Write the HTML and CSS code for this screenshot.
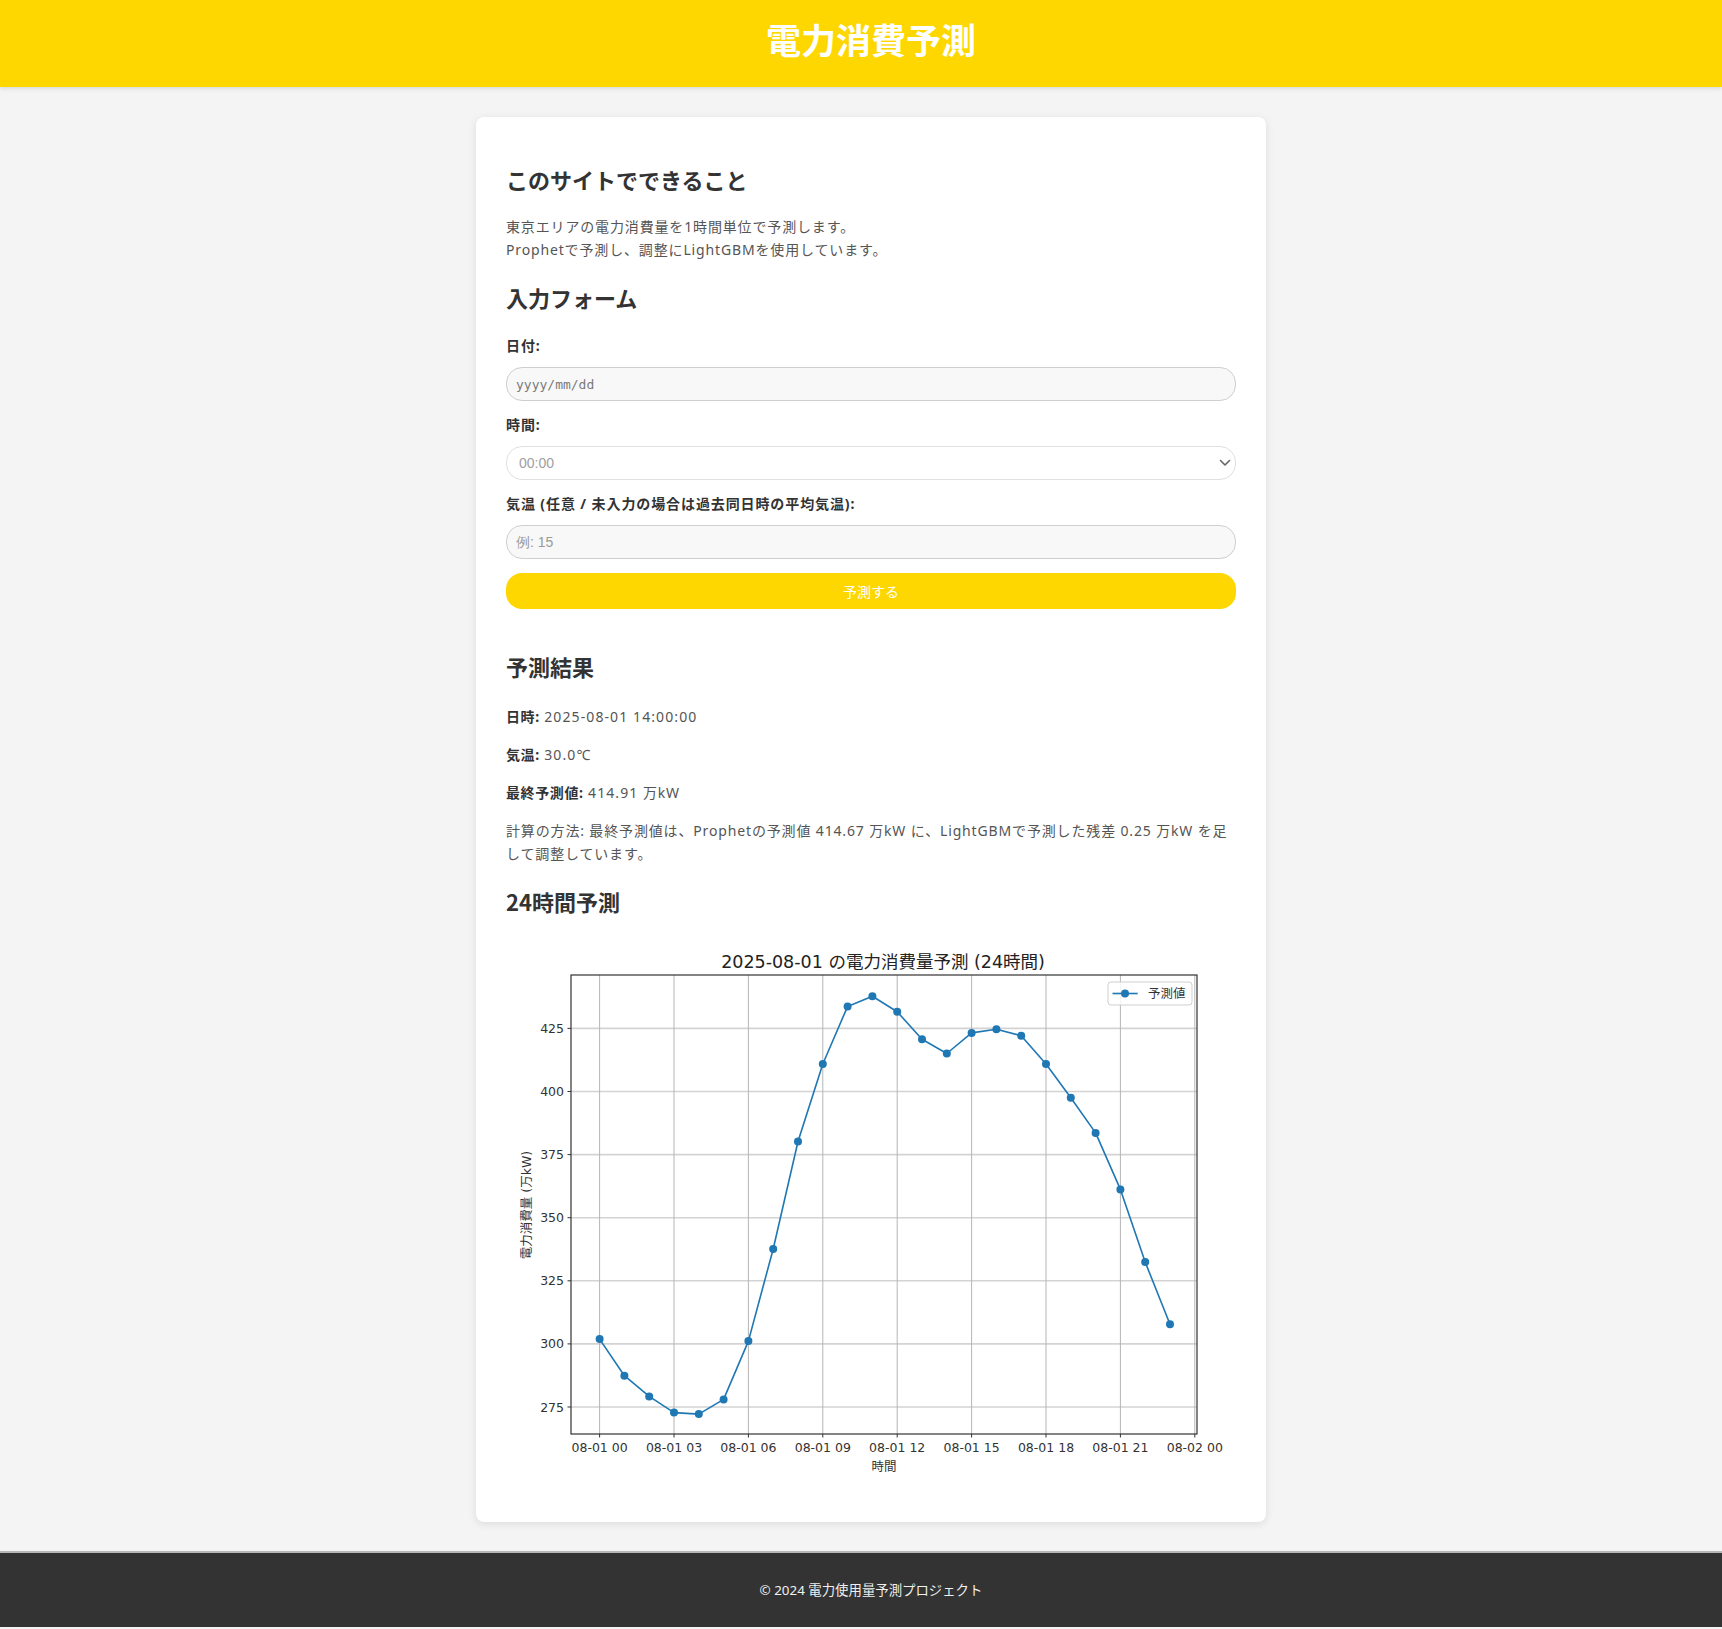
FILE: index.html
```html
<!DOCTYPE html>
<html lang="ja">
<head>
<meta charset="utf-8">
<title>電力消費予測</title>
<link rel="stylesheet" href="styles.css">
</head>
<body>
<header class="site-header">
  <h1 class="site-title">電力消費予測</h1>
</header>
<main class="main">
  <div class="card">
    <section class="intro">
      <h2 class="section-title">このサイトでできること</h2>
      <p class="text">東京エリアの電力消費量を1時間単位で予測します。<br>Prophetで予測し、調整にLightGBMを使用しています。</p>
    </section>
    <h2 class="section-title">入力フォーム</h2>
    <form class="form">
      <div class="field">
        <label class="label" for="date">日付:</label>
        <input class="input input-date" id="date" type="text" placeholder="yyyy/mm/dd">
      </div>
      <div class="field">
        <label class="label" for="hour">時間:</label>
        <div class="select-wrap">
          <select class="select" id="hour"><option>00:00</option></select>
          <svg class="chevron" width="12" height="8" viewBox="0 0 12 8"><path d="M1.5 1.5 L6 6 L10.5 1.5" fill="none" stroke="#666" stroke-width="1.6" stroke-linecap="round" stroke-linejoin="round"/></svg>
        </div>
      </div>
      <div class="field">
        <label class="label" for="temp">気温 (任意 / 未入力の場合は過去同日時の平均気温):</label>
        <input class="input input-temp" id="temp" type="text" placeholder="例: 15">
      </div>
      <button class="button" type="button">予測する</button>
    </form>
    <section class="result">
      <h2 class="section-title">予測結果</h2>
      <p class="text text-first"><strong class="key">日時:</strong> <span class="num">2025-08-01 14:00:00</span></p>
      <p class="text"><strong class="key">気温:</strong> <span class="num">30.0℃</span></p>
      <p class="text"><strong class="key">最終予測値:</strong> <span class="num">414.91</span> 万kW</p>
      <p class="text">計算の方法: 最終予測値は、Prophetの予測値 414.67 万kW に、LightGBMで予測した残差 0.25 万kW を足して調整しています。</p>
      <h2 class="section-title">24時間予測</h2>
      <svg class="chart" width="730" height="555" viewBox="0 0 730 555">
        <text class="chart-title" x="377" y="31" text-anchor="middle">2025-08-01 の電力消費量予測 (24時間)</text>
        <g class="grid-h" stroke="#d3d3d3" stroke-width="1.6">
          <line x1="65" x2="691" y1="470" y2="470"/>
          <line x1="65" x2="691" y1="406.9" y2="406.9"/>
          <line x1="65" x2="691" y1="343.8" y2="343.8"/>
          <line x1="65" x2="691" y1="280.7" y2="280.7"/>
          <line x1="65" x2="691" y1="217.6" y2="217.6"/>
          <line x1="65" x2="691" y1="154.5" y2="154.5"/>
          <line x1="65" x2="691" y1="91.4" y2="91.4"/>
        </g>
        <g class="grid-v" stroke="#b5b5b5" stroke-width="1">
          <line y1="38" y2="497" x1="93.6" x2="93.6"/>
          <line y1="38" y2="497" x1="168" x2="168"/>
          <line y1="38" y2="497" x1="242.4" x2="242.4"/>
          <line y1="38" y2="497" x1="316.8" x2="316.8"/>
          <line y1="38" y2="497" x1="391.2" x2="391.2"/>
          <line y1="38" y2="497" x1="465.6" x2="465.6"/>
          <line y1="38" y2="497" x1="540" x2="540"/>
          <line y1="38" y2="497" x1="614.4" x2="614.4"/>
          <line y1="38" y2="497" x1="688.8" x2="688.8"/>
        </g>
        <g stroke="#333" stroke-width="1">
          <line x1="61.5" x2="65" y1="470" y2="470"/>
          <line x1="61.5" x2="65" y1="406.9" y2="406.9"/>
          <line x1="61.5" x2="65" y1="343.8" y2="343.8"/>
          <line x1="61.5" x2="65" y1="280.7" y2="280.7"/>
          <line x1="61.5" x2="65" y1="217.6" y2="217.6"/>
          <line x1="61.5" x2="65" y1="154.5" y2="154.5"/>
          <line x1="61.5" x2="65" y1="91.4" y2="91.4"/>
          <line y1="497" y2="500.5" x1="93.6" x2="93.6"/>
          <line y1="497" y2="500.5" x1="168" x2="168"/>
          <line y1="497" y2="500.5" x1="242.4" x2="242.4"/>
          <line y1="497" y2="500.5" x1="316.8" x2="316.8"/>
          <line y1="497" y2="500.5" x1="391.2" x2="391.2"/>
          <line y1="497" y2="500.5" x1="465.6" x2="465.6"/>
          <line y1="497" y2="500.5" x1="540" x2="540"/>
          <line y1="497" y2="500.5" x1="614.4" x2="614.4"/>
          <line y1="497" y2="500.5" x1="688.8" x2="688.8"/>
        </g>
        <polyline fill="none" stroke="#1f77b4" stroke-width="1.6" stroke-linejoin="round" points="93.6,402.1 118.4,438.7 143.2,459.4 168,475.6 192.8,477.1 217.6,462.4 242.4,404.1 267.2,312 292,204.5 316.8,127 341.6,69.4 366.4,59.3 391.2,74.7 416,102.3 440.8,116.5 465.6,95.9 490.4,92.2 515.2,98.7 540,127 564.8,160.8 589.6,195.9 614.4,252.4 639.2,325.1 664,387.2"/>
        <g fill="#1f77b4">
          <circle cx="93.6" cy="402.1" r="4"/>
          <circle cx="118.4" cy="438.7" r="4"/>
          <circle cx="143.2" cy="459.4" r="4"/>
          <circle cx="168" cy="475.6" r="4"/>
          <circle cx="192.8" cy="477.1" r="4"/>
          <circle cx="217.6" cy="462.4" r="4"/>
          <circle cx="242.4" cy="404.1" r="4"/>
          <circle cx="267.2" cy="312" r="4"/>
          <circle cx="292" cy="204.5" r="4"/>
          <circle cx="316.8" cy="127" r="4"/>
          <circle cx="341.6" cy="69.4" r="4"/>
          <circle cx="366.4" cy="59.3" r="4"/>
          <circle cx="391.2" cy="74.7" r="4"/>
          <circle cx="416" cy="102.3" r="4"/>
          <circle cx="440.8" cy="116.5" r="4"/>
          <circle cx="465.6" cy="95.9" r="4"/>
          <circle cx="490.4" cy="92.2" r="4"/>
          <circle cx="515.2" cy="98.7" r="4"/>
          <circle cx="540" cy="127" r="4"/>
          <circle cx="564.8" cy="160.8" r="4"/>
          <circle cx="589.6" cy="195.9" r="4"/>
          <circle cx="614.4" cy="252.4" r="4"/>
          <circle cx="639.2" cy="325.1" r="4"/>
          <circle cx="664" cy="387.2" r="4"/>
        </g>
        <rect x="65" y="38" width="626" height="459" fill="none" stroke="#333" stroke-width="1.2"/>
        <g class="legend">
          <rect x="602" y="45" width="84" height="23" rx="3" fill="#fff" fill-opacity="0.85" stroke="#cfcfcf" stroke-width="1"/>
          <line x1="606.5" x2="631.7" y1="56.5" y2="56.5" stroke="#1f77b4" stroke-width="1.6"/>
          <circle cx="619" cy="56.5" r="4" fill="#1f77b4"/>
          <text class="tick" x="642" y="61">予測値</text>
        </g>
        <g class="tick" text-anchor="end">
          <text x="58" y="474.5">275</text>
          <text x="58" y="411.4">300</text>
          <text x="58" y="348.3">325</text>
          <text x="58" y="285.2">350</text>
          <text x="58" y="222.1">375</text>
          <text x="58" y="159">400</text>
          <text x="58" y="95.9">425</text>
        </g>
        <g class="tick" text-anchor="middle">
          <text x="93.6" y="514.5">08-01 00</text>
          <text x="168" y="514.5">08-01 03</text>
          <text x="242.4" y="514.5">08-01 06</text>
          <text x="316.8" y="514.5">08-01 09</text>
          <text x="391.2" y="514.5">08-01 12</text>
          <text x="465.6" y="514.5">08-01 15</text>
          <text x="540" y="514.5">08-01 18</text>
          <text x="614.4" y="514.5">08-01 21</text>
          <text x="688.8" y="514.5">08-02 00</text>
        </g>
        <text class="tick" x="378" y="533.5" text-anchor="middle">時間</text>
        <text class="tick" x="0" y="0" text-anchor="middle" transform="translate(24.5 268) rotate(-90)">電力消費量 (万kW)</text>
      </svg>
    </section>
  </div>
</main>
<footer class="site-footer">
  <p class="footer-text">© 2024 電力使用量予測プロジェクト</p>
</footer>
</body>
</html>
```

FILE: styles.css
```css
* {
  box-sizing: border-box;
}

html, body {
  margin: 0;
  padding: 0;
}

body {
  background: #f4f4f4;
  font-family: "Noto Sans", "Noto Sans CJK JP", sans-serif;
  color: #333;
  font-size: 14px;
}

.site-header {
  background: #ffd700;
  height: 87px;
  padding: 18px 0 27px 20px;
  box-shadow: 0 2px 4px rgba(0, 0, 0, 0.1);
  text-align: center;
}

.site-title {
  margin: 0;
  font-family: "Noto Sans CJK JP", sans-serif;
  font-size: 35px;
  line-height: 42px;
  font-weight: 700;
  color: #fff;
}

.main {
  padding: 30px 0 29px 20px;
}

.card {
  width: 790px;
  margin: 0 auto;
  background: #fff;
  border-radius: 8px;
  box-shadow: 0 2px 8px rgba(0, 0, 0, 0.1);
  padding: 26px 30px 30px;
}

.section-title {
  font-family: "Noto Sans CJK JP", sans-serif;
  font-size: 22px;
  line-height: 28px;
  font-weight: 700;
  color: #333;
  margin: 22px 0;
}

.text {
  margin: 15px 0;
  font-size: 14px;
  line-height: 23px;
  letter-spacing: 0.85px;
  color: #555;
}

.text-first {
  margin-top: 25px;
}

.num {
  letter-spacing: 1.1px;
}

.key {
  color: #333;
  font-weight: 700;
  letter-spacing: 0.6px;
}

.form {
  display: flex;
  flex-direction: column;
  padding-top: 3px;
}

.field {
  display: flex;
  flex-direction: column;
  margin-bottom: 14px;
}

.label {
  display: block;
  font-size: 14px;
  line-height: 20px;
  font-weight: 700;
  letter-spacing: 0.9px;
  color: #333;
  margin-bottom: 11px;
}

.input {
  height: 34px;
  width: 100%;
  border: 1px solid #cfcfcf;
  border-radius: 16px;
  background: #f8f8f8;
  padding: 0 9px;
  font-size: 14px;
  color: #333;
  outline: none;
}

.input-date::placeholder {
  font-family: "DejaVu Sans Mono", "Liberation Mono", monospace;
  font-size: 13px;
  color: #7a7a7a;
}

.input-temp::placeholder {
  font-family: "Liberation Sans", Arial, sans-serif;
  font-size: 14px;
  color: #9a9a9a;
}

.select-wrap {
  position: relative;
}

.select {
  appearance: none;
  -webkit-appearance: none;
  display: block;
  width: 100%;
  height: 34px;
  border: 1px solid #e0e0e0;
  border-radius: 16px;
  background: #fff;
  padding: 0 12px;
  font-family: "Liberation Sans", Arial, sans-serif;
  font-size: 14px;
  color: #a0a0a0;
  outline: none;
}

.chevron {
  position: absolute;
  right: 5px;
  top: 13px;
}

.button {
  height: 36px;
  border: none;
  border-radius: 16px;
  background: #ffd700;
  color: #fff;
  font-family: "Noto Sans CJK JP", sans-serif;
  font-size: 14px;
  cursor: pointer;
}

.result {
  padding-top: 21px;
}

.chart {
  display: block;
}

.chart-title {
  font-family: "DejaVu Sans", "Noto Sans CJK JP", sans-serif;
  font-size: 17.5px;
  fill: #222;
}

.tick {
  font-family: "DejaVu Sans", "Noto Sans CJK JP", sans-serif;
  font-size: 12.5px;
  fill: #333;
}

.site-footer {
  background: #333;
  border-top: 2px solid #b8b8b8;
  padding: 0 0 0 20px;
  height: 76px;
  display: flex;
  align-items: center;
  justify-content: center;
}

.footer-text {
  margin: 0;
  font-size: 13.4px;
  line-height: 20px;
  color: #f0f0f0;
}
```
